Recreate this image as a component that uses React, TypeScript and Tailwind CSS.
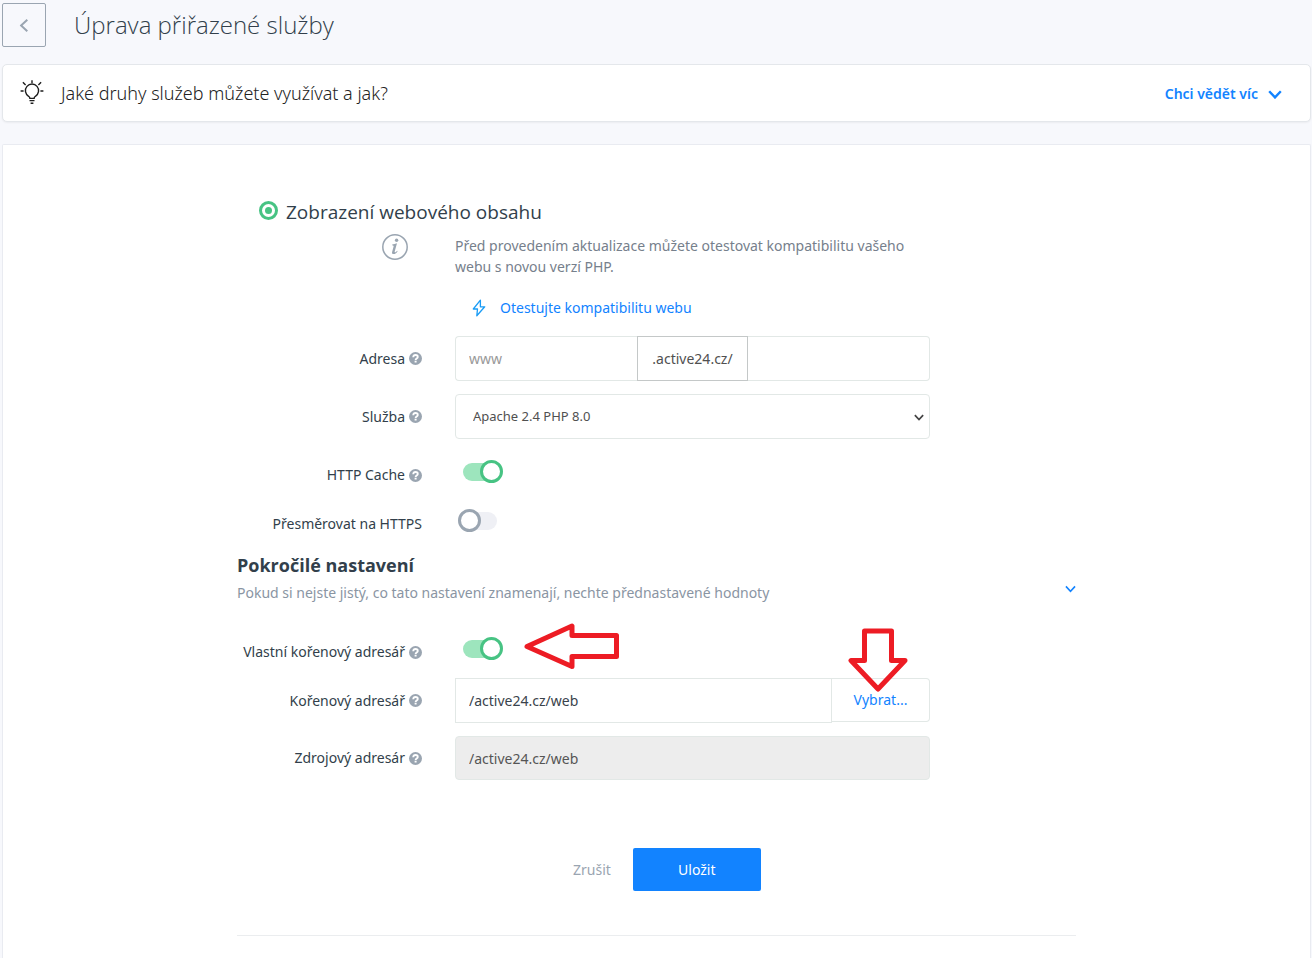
import type { ReactNode } from 'react';

function HelpIcon() {
  return (
    <svg viewBox="0 0 13 13" className="size-[13px] shrink-0" aria-hidden="true">
      <circle cx="6.5" cy="6.5" r="6.5" fill="#9aa5b1" />
      <path
        d="M4.2 5.2C4.3 3.8 5.2 3 6.5 3c1.4 0 2.3.8 2.3 1.9 0 1.6-2.2 1.5-2.2 3"
        fill="none"
        stroke="#fff"
        strokeWidth="1.8"
      />
      <rect x="5.6" y="8.7" width="2" height="1.8" fill="#fff" />
    </svg>
  );
}

function Chevron({ className }: { className: string }) {
  return (
    <svg viewBox="0 0 14 9" className={className} fill="none" stroke="currentColor" aria-hidden="true">
      <path d="M1.2 1.2 7 7.4l5.8-6.2" />
    </svg>
  );
}

function BulbIcon() {
  return (
    <svg viewBox="0 0 24 26" className="h-[26px] w-6 shrink-0" fill="none" stroke="#1d1d1d" strokeWidth="1.4" aria-hidden="true">
      <path d="M9.9 18.4c0-.9-.5-1.5-1.300-2.100a6.600 6.600 0 1 1 6.800 0c-.8.6-1.300 1.200-1.300 2.100z" />
      <path d="M9.5 20.6h5M10.6 23.2h2.8" />
      <path d="M12 .2V3M.6 11h3M20.4 11h3M2.9 2.300l2.700 2.700M21.100 2.300l-2.700 2.700" />
    </svg>
  );
}

function FieldRow({
  id,
  label,
  help = true,
  toggle = false,
  className,
  children,
}: {
  id: string;
  label: string;
  help?: boolean;
  toggle?: boolean;
  className: string;
  children: ReactNode;
}) {
  return (
    <div
      className={`grid grid-cols-[185px_minmax(0,475px)] gap-x-[33px] ${toggle ? 'items-start' : 'items-center'} ${className}`}
    >
      <label htmlFor={id} className="flex items-center justify-end gap-1 text-sm leading-[30px] whitespace-nowrap text-[#323f4b]">
        {label}
        {help && <HelpIcon />}
      </label>
      {children}
    </div>
  );
}

function Toggle({ id, on = false }: { id: string; on?: boolean }) {
  return (
    <input
      id={id}
      type="checkbox"
      role="switch"
      defaultChecked={on}
      className="relative mt-[3px] ml-2 h-[18px] w-[34px] cursor-pointer appearance-none rounded-full bg-[#eff0f5] before:absolute before:-top-[3px] before:-left-[5px] before:size-[23px] before:rounded-full before:border-3 before:border-[#9aa5b1] before:bg-white checked:bg-[#9de5bd] checked:before:left-[17px] checked:before:border-[#47c383]"
    />
  );
}

export default function App() {
  return (
    <div className="flex min-h-screen flex-col bg-[#f7f8fc] pr-px pl-0.5 font-['Noto_Sans','Open_Sans',sans-serif] text-[#323f4b]">
      <header className="flex h-16 items-start pt-[3px]">
        <button
          type="button"
          aria-label="Zpět"
          className="flex size-11 items-center justify-center rounded-xs border border-[#9aa5b1] text-[#9aa5b1]"
        >
          <Chevron className="h-[9px] w-3.5 shrink-0 rotate-90 stroke-2" />
        </button>
        <h1 className="ml-7 font-['Open_Sans',sans-serif] text-2xl leading-[44px] font-light">Úprava přiřazené služby</h1>
      </header>

      <section className="flex h-[58px] items-center justify-between rounded-[5px] border border-[#e4e7eb] bg-white pr-7 pl-[17px] shadow-xs">
        <div className="flex items-center gap-[17px]">
          <BulbIcon />
          <h2 className="text-lg font-light text-[#222]">Jaké druhy služeb můžete využívat a jak?</h2>
        </div>
        <button type="button" className="mt-0.5 flex items-center gap-2.5 text-sm font-semibold text-[#1283ff]">
          Chci vědět víc
          <Chevron className="h-[9px] w-3.5 stroke-[2.4]" />
        </button>
      </section>

      <main className="mt-[22px] flex-1 rounded-t-xs border border-b-0 border-[#e9ebf1] bg-white pt-[53px]">
        <form className="mx-auto max-w-[839px]" onSubmit={(e) => e.preventDefault()}>
          <div className="ml-[22px] flex items-center gap-2">
            <input
              id="content"
              type="radio"
              name="mode"
              defaultChecked
              className="relative mb-1 size-[19px] appearance-none rounded-full border-3 border-[#47c383] before:absolute before:inset-[3px] before:rounded-full before:bg-[#47c383]"
            />
            <label htmlFor="content" className="font-['Open_Sans',sans-serif] text-[19px] leading-7">
              Zobrazení webového obsahu
            </label>
          </div>

          <div className="mt-2 grid grid-cols-[185px_minmax(0,475px)] gap-x-[33px]">
            <svg viewBox="0 0 26 26" className="mr-3.5 size-[26px] justify-self-end" fill="none" stroke="#9aa5b1" aria-hidden="true">
              <circle cx="13" cy="13" r="12.2" strokeWidth="1.5" />
              <circle cx="14.6" cy="6.2" r="1.7" fill="#9aa5b1" stroke="none" />
              <path d="M10.2 10.4c1.6-.2 3-.6 4.800-1.100l-2.300 8.300c-.2.9.4 1 1.100.5.500-.3.900-.8 1.300-1.300l.5.400c-1 1.600-2.300 2.900-4 2.900-1.300 0-1.900-.9-1.500-2.200l1.500-5.300c.2-.8-.2-1.200-1.400-1.300z" fill="#9aa5b1" stroke="none" />
            </svg>
            <div>
              <p className="pt-px text-sm leading-[21px] text-[#76808c]">
                Před provedením aktualizace můžete otestovat kompatibilitu vašeho webu s novou verzí PHP.
              </p>
              <a href="#test" className="mt-[21px] ml-[17px] flex items-center gap-3.5 text-sm leading-5 text-[#1283ff]">
                <svg viewBox="0 0 14 18" className="h-[18px] w-3.5" fill="none" stroke="#1a9cf5" strokeWidth="1.3" strokeLinejoin="round" aria-hidden="true">
                  <path d="M8.4 1.2 1.3 10h4.200L4.800 16.800l7.900-9H8.400z" />
                </svg>
                Otestujte kompatibilitu webu
              </a>
            </div>
          </div>

          <FieldRow id="address" label="Adresa" className="mt-[18px]">
            <div className="flex h-[45px] text-sm">
              <input
                id="address"
                type="text"
                placeholder="www"
                className="min-w-0 flex-1 rounded-l-sm border border-r-0 border-[#e2e8e6] px-[13px] placeholder:text-[#999]"
              />
              <span className="flex items-center border border-[#c4c8c8] px-3.5 text-[#505050]">.active24.cz/</span>
              <input
                type="text"
                aria-label="Cesta"
                className="min-w-0 flex-1 rounded-r-sm border border-l-0 border-[#e2e8e6] px-[13px]"
              />
            </div>
          </FieldRow>

          <FieldRow id="service" label="Služba" className="mt-[13px]">
            <div className="relative">
              <select
                id="service"
                className="h-[45px] w-full appearance-none rounded-sm border border-[#e2e8e6] bg-white pr-8 pl-[17px] text-[13px] text-[#505050]"
              >
                <option>Apache 2.4 PHP 8.0</option>
              </select>
              <Chevron className="pointer-events-none absolute top-5 right-1.5 h-[7px] w-2.5 stroke-[2.4] text-[#444]" />
            </div>
          </FieldRow>

          <FieldRow id="cache" label="HTTP Cache" toggle className="mt-[21px]">
            <Toggle id="cache" on />
          </FieldRow>

          <FieldRow id="https" label="Přesměrovat na HTTPS" help={false} toggle className="mt-[19px]">
            <Toggle id="https" />
          </FieldRow>

          <div className="mt-3 flex items-center justify-between">
            <div>
              <h2 className="font-['Open_Sans',sans-serif] text-lg leading-7 font-bold">Pokročilé nastavení</h2>
              <p className="mt-0.5 text-sm leading-6 text-[#8a95a3]">
                Pokud si nejste jistý, co tato nastavení znamenají, nechte přednastavené hodnoty
              </p>
            </div>
            <button type="button" aria-label="Sbalit pokročilé nastavení" className="mt-[22px] text-[#1283ff]">
              <Chevron className="h-2 w-[11px] stroke-2" />
            </button>
          </div>

          <FieldRow id="custom-root" label="Vlastní kořenový adresář" toggle className="mt-8">
            <div className="relative">
              <Toggle id="custom-root" on />
              <svg viewBox="0 0 96 47" className="pointer-events-none absolute -top-3.5 left-[69px] h-[47px] w-24" fill="none" stroke="#ed1c24" strokeWidth="5" strokeLinejoin="round" aria-hidden="true">
                <path d="M3 23.5 48 3v9.500h44.500v21H48V43.500z" />
              </svg>
            </div>
          </FieldRow>

          <FieldRow id="root" label="Kořenový adresář" className="mt-[11px]">
            <div className="relative flex h-[45px] text-sm">
              <input
                id="root"
                type="text"
                defaultValue="/active24.cz/web"
                className="min-w-0 flex-1 border border-[#e2e8e6] px-[13px] text-[#3a434c]"
              />
              <button type="button" className="mb-px w-[98px] rounded-r-sm border border-l-0 border-[#e2e8e6] text-[#1283ff]">
                Vybrat...
              </button>
              <svg viewBox="0 0 60 64" className="pointer-events-none absolute right-[22px] bottom-[31px] h-16 w-[60px]" fill="none" stroke="#ed1c24" strokeWidth="5" strokeLinejoin="round" aria-hidden="true">
                <path d="M16.5 3h27v29.500H57L30 61 3 32.500h13.500z" />
              </svg>
            </div>
          </FieldRow>

          <FieldRow id="source" label="Zdrojový adresár" className="mt-[13px]">
            <input
              id="source"
              type="text"
              disabled
              defaultValue="/active24.cz/web"
              className="h-11 w-full rounded-sm border border-[#e2e8e6] bg-[#ededed] px-[13px] text-sm text-[#555]"
            />
          </FieldRow>

          <div className="mt-[68px] ml-[336px] flex items-center gap-[22px] text-sm">
            <button type="button" className="text-[#9aa5b1]">
              Zrušit
            </button>
            <button type="submit" className="h-[43px] w-32 rounded-xs bg-[#1283ff] text-white">
              Uložit
            </button>
          </div>

          <hr className="mt-11 border-[#ebedef]" />
        </form>
      </main>
    </div>
  );
}
